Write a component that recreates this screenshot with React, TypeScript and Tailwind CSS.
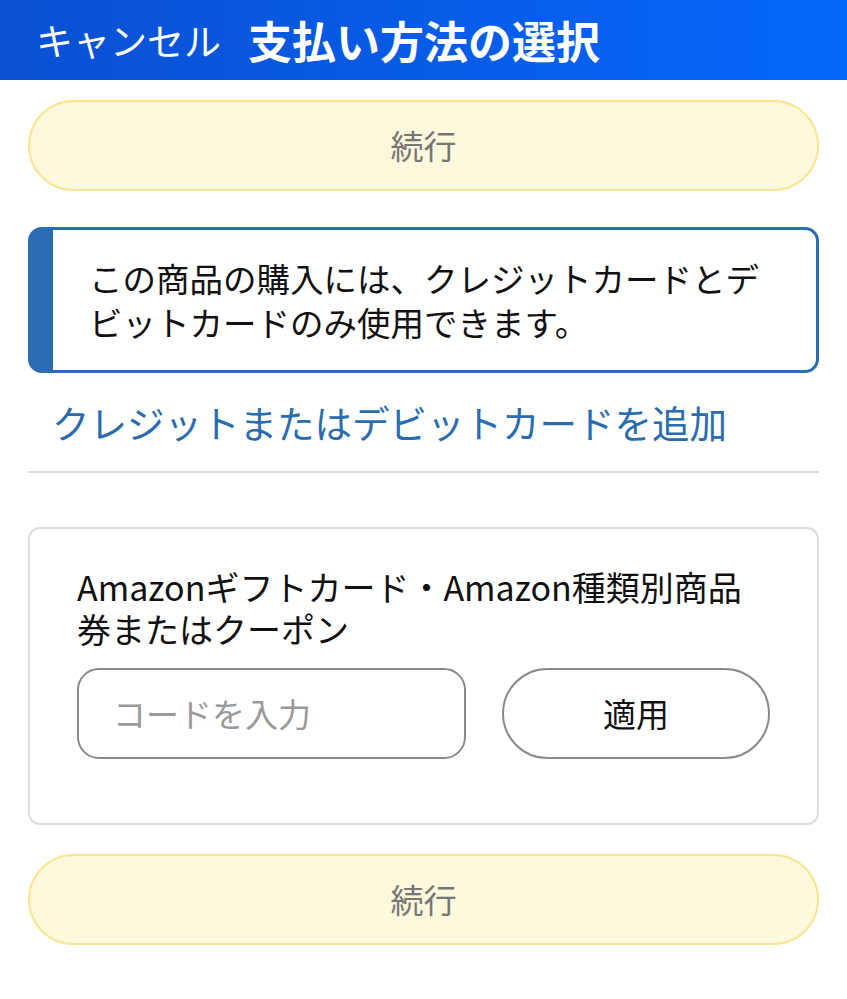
import React from "react";

const FONT = "font-['Noto_Sans_CJK_JP','Noto_Sans',sans-serif]";

// Disabled yellow continue button
const ContinueButton = ({ className = "" }: { className?: string }) => (
  <button
    className={`flex h-[91px] w-full items-center justify-center rounded-full border-2 border-[#fbe590] bg-[#fef8dc] text-[33px] text-[#777777] ${className}`}
  >
    続行
  </button>
);

export default function App() {
  return (
    <div className={`min-h-[999px] w-[847px] bg-white ${FONT}`}>
      {/* header */}
      <header className="flex h-[80px] items-center bg-gradient-to-r from-[#0a50d2] to-[#0467fb] pl-[36px] text-white">
        <span className="text-[37px] leading-none">キャンセル</span>
        <h1 className="ml-[27px] text-[44px] font-bold leading-none">支払い方法の選択</h1>
      </header>

      <main className="px-[28px]">
        <ContinueButton className="mt-[20px]" />

        {/* notice */}
        <div className="mt-[36px] flex h-[146px] items-center rounded-[14px] border-[3px] border-l-[25px] border-[#2a6db5] pl-[36px] pr-[30px]">
          <div className="text-[33.5px] leading-[44px] text-[#111111]">
            <span className="block">この商品の購入には、クレジットカードとデ</span>
            <span className="block">ビットカードのみ使用できます。</span>
          </div>
        </div>

        <a className="mt-[24px] block pl-[24px] text-[37.5px] leading-[50px] text-[#2a6cb0]">
          クレジットまたはデビットカードを追加
        </a>

        <div className="mt-[24px] h-[2px] w-full bg-[#dcdcdc]" />

        {/* gift card */}
        <div className="mt-[54px] rounded-[12px] border-2 border-[#dddddd] px-[47px] pb-[64px] pt-[37px]">
          <div className="text-[34px] leading-[42px] text-[#111111]">
            <span className="block">Amazonギフトカード・Amazon種類別商品</span>
            <span className="block">券またはクーポン</span>
          </div>
          <div className="mt-[18px] flex gap-[36px]">
            <div className="flex h-[91px] w-[389px] items-center rounded-[22px] border-2 border-[#8a8a8a] pl-[34px] text-[33px] text-[#9a9a9a]">
              コードを入力
            </div>
            <button className="flex h-[91px] w-[268px] items-center justify-center rounded-full border-2 border-[#8a8a8a] text-[33px] text-[#111111]">
              適用
            </button>
          </div>
        </div>

        <ContinueButton className="mt-[29px]" />
      </main>
    </div>
  );
}
